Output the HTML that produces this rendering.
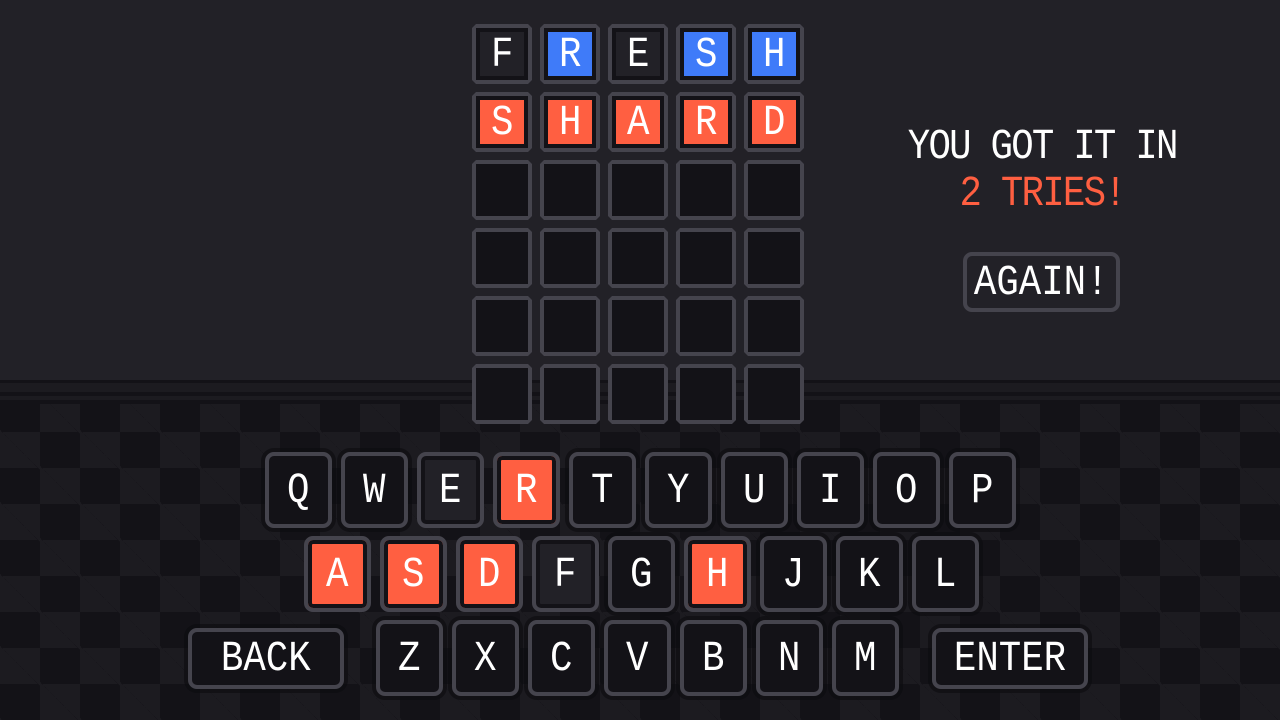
<!DOCTYPE html>
<html><head><meta charset="utf-8"><style>
*{margin:0;padding:0;box-sizing:border-box}
body{width:1280px;height:720px;overflow:hidden;position:relative;background:#222127;font-family:"Liberation Mono",monospace;color:#fff}
.bot{position:absolute;left:0;top:404px;width:1280px;height:316px;
background-color:#131217;
background-image:linear-gradient(45deg,#1c1b20 25%,transparent 25%,transparent 75%,#1c1b20 75%),linear-gradient(45deg,#1c1b20 25%,transparent 25%,transparent 75%,#1c1b20 75%);
background-size:80px 72px;background-position:0 -8px,40px 28px}
.band{position:absolute;left:0;width:1280px}
.t{position:absolute;width:60px;height:60px;background:#45444d;clip-path:polygon(4px 0,56px 0,60px 4px,60px 56px,56px 60px,4px 60px,0 56px,0 4px)}
.t i{position:absolute;left:4px;top:4px;width:52px;height:52px;background:#131217}
.t b{position:absolute;left:8px;top:8px;width:44px;height:44px;font-weight:normal;font-size:34px;line-height:48px;text-align:center;display:block}
.t b span,.k span,.txt span{display:inline-block;transform:scale(1.1,1.25)}
.k{position:absolute;width:67px;height:76px;border:4px solid #45444d;border-radius:9px;background:#131217;font-size:34px;text-align:center;line-height:72px;box-shadow:0 0 0 4px rgba(12,11,15,.6)}
.k.f{background:#222127;box-shadow:inset 0 0 0 4px #131217}
.k.r{background:#ff5f41;box-shadow:inset 0 0 0 4px #131217}
.w{width:156px;height:61px;line-height:57px}
.txt{position:absolute;left:880px;width:324px;text-align:center;font-size:34px}
</style></head><body>
<div class="bot"></div>
<div class="band" style="top:380px;height:24px;background:#131217"></div>
<div class="band" style="top:383px;height:9px;background:#1c1b20"></div>
<div class="band" style="top:396px;height:4px;background:#1c1b20"></div>

<div class="t" style="left:472px;top:24px"><i></i><b style="background:#222127"><span>F</span></b></div>
<div class="t" style="left:540px;top:24px"><i></i><b style="background:#3f7bf9"><span>R</span></b></div>
<div class="t" style="left:608px;top:24px"><i></i><b style="background:#222127"><span>E</span></b></div>
<div class="t" style="left:676px;top:24px"><i></i><b style="background:#3f7bf9"><span>S</span></b></div>
<div class="t" style="left:744px;top:24px"><i></i><b style="background:#3f7bf9"><span>H</span></b></div>
<div class="t" style="left:472px;top:92px"><i></i><b style="background:#ff5f41"><span>S</span></b></div>
<div class="t" style="left:540px;top:92px"><i></i><b style="background:#ff5f41"><span>H</span></b></div>
<div class="t" style="left:608px;top:92px"><i></i><b style="background:#ff5f41"><span>A</span></b></div>
<div class="t" style="left:676px;top:92px"><i></i><b style="background:#ff5f41"><span>R</span></b></div>
<div class="t" style="left:744px;top:92px"><i></i><b style="background:#ff5f41"><span>D</span></b></div>
<div class="t" style="left:472px;top:160px"><i></i></div><div class="t" style="left:540px;top:160px"><i></i></div><div class="t" style="left:608px;top:160px"><i></i></div><div class="t" style="left:676px;top:160px"><i></i></div><div class="t" style="left:744px;top:160px"><i></i></div>
<div class="t" style="left:472px;top:228px"><i></i></div><div class="t" style="left:540px;top:228px"><i></i></div><div class="t" style="left:608px;top:228px"><i></i></div><div class="t" style="left:676px;top:228px"><i></i></div><div class="t" style="left:744px;top:228px"><i></i></div>
<div class="t" style="left:472px;top:296px"><i></i></div><div class="t" style="left:540px;top:296px"><i></i></div><div class="t" style="left:608px;top:296px"><i></i></div><div class="t" style="left:676px;top:296px"><i></i></div><div class="t" style="left:744px;top:296px"><i></i></div>
<div class="t" style="left:472px;top:364px"><i></i></div><div class="t" style="left:540px;top:364px"><i></i></div><div class="t" style="left:608px;top:364px"><i></i></div><div class="t" style="left:676px;top:364px"><i></i></div><div class="t" style="left:744px;top:364px"><i></i></div>

<div class="txt" style="top:126px;line-height:44px;letter-spacing:-1.6px"><span>YOU GOT IT IN</span></div>
<div class="txt" style="top:173px;line-height:44px;color:#ff5f41;letter-spacing:-1.6px"><span>2 TRIES!</span></div>
<div class="k w" style="left:963px;top:252px;width:157px;height:60px;line-height:56px;box-shadow:none;background:#222127"><span>AGAIN!</span></div>

<div class="k" style="left:265px;top:452px"><span>Q</span></div>
<div class="k" style="left:341px;top:452px"><span>W</span></div>
<div class="k f" style="left:417px;top:452px"><span>E</span></div>
<div class="k r" style="left:493px;top:452px"><span>R</span></div>
<div class="k" style="left:569px;top:452px"><span>T</span></div>
<div class="k" style="left:645px;top:452px"><span>Y</span></div>
<div class="k" style="left:721px;top:452px"><span>U</span></div>
<div class="k" style="left:797px;top:452px"><span>I</span></div>
<div class="k" style="left:873px;top:452px"><span>O</span></div>
<div class="k" style="left:949px;top:452px"><span>P</span></div>

<div class="k r" style="left:304px;top:536px"><span>A</span></div>
<div class="k r" style="left:380px;top:536px"><span>S</span></div>
<div class="k r" style="left:456px;top:536px"><span>D</span></div>
<div class="k f" style="left:532px;top:536px"><span>F</span></div>
<div class="k" style="left:608px;top:536px"><span>G</span></div>
<div class="k r" style="left:684px;top:536px"><span>H</span></div>
<div class="k" style="left:760px;top:536px"><span>J</span></div>
<div class="k" style="left:836px;top:536px"><span>K</span></div>
<div class="k" style="left:912px;top:536px"><span>L</span></div>

<div class="k w" style="left:188px;top:628px"><span>BACK</span></div>
<div class="k" style="left:376px;top:620px"><span>Z</span></div>
<div class="k" style="left:452px;top:620px"><span>X</span></div>
<div class="k" style="left:528px;top:620px"><span>C</span></div>
<div class="k" style="left:604px;top:620px"><span>V</span></div>
<div class="k" style="left:680px;top:620px"><span>B</span></div>
<div class="k" style="left:756px;top:620px"><span>N</span></div>
<div class="k" style="left:832px;top:620px"><span>M</span></div>
<div class="k w" style="left:932px;top:628px"><span>ENTER</span></div>
</body></html>
